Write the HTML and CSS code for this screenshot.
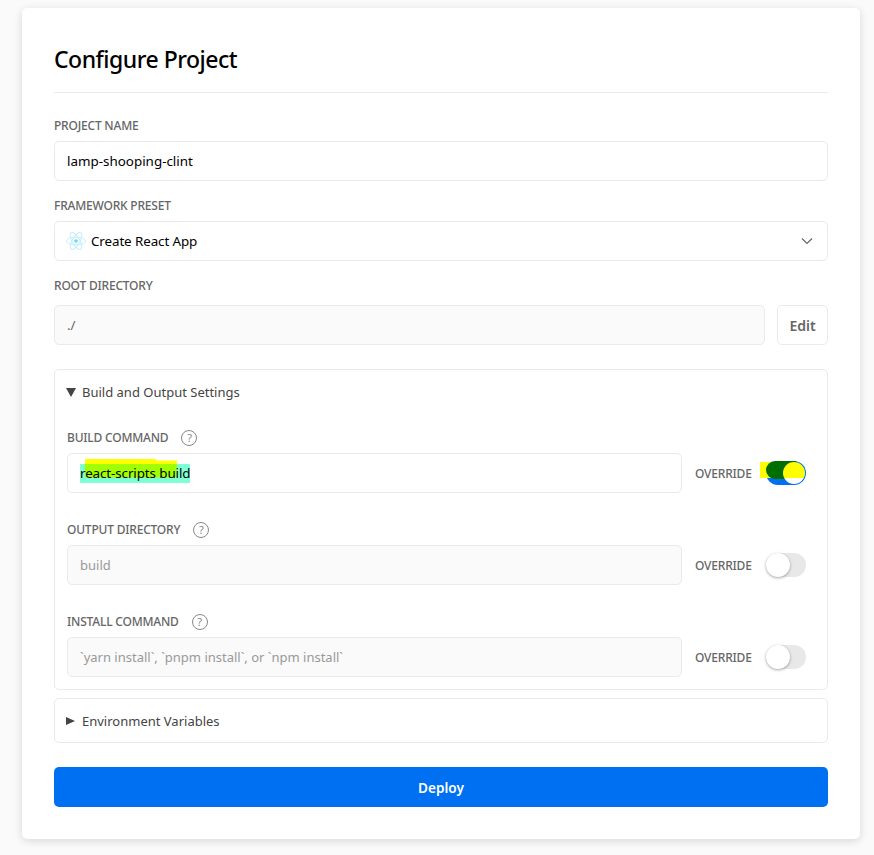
FILE: index.html
```html
<!DOCTYPE html>
<html lang="en">
<head>
    <meta charset="UTF-8">
    <title>Configure Project</title>
    <link rel="stylesheet" href="styles.css">
</head>
<body>
    <main class="card">
        <h1>Configure Project</h1>

        <div class="field">
            <label class="label">PROJECT NAME</label>
            <div class="input">lamp-shooping-clint</div>
        </div>

        <div class="field">
            <label class="label">FRAMEWORK PRESET</label>
            <div class="input select">
                <svg class="react" viewBox="-11 -11 22 22" width="20" height="20" fill="none" stroke="#bdeefc" stroke-width="1">
                    <ellipse rx="10.5" ry="4.2"/>
                    <ellipse rx="10.5" ry="4.2" transform="rotate(60)"/>
                    <ellipse rx="10.5" ry="4.2" transform="rotate(120)"/>
                    <circle r="2" fill="#61dafb" stroke="none"/>
                </svg>
                <span>Create React App</span>
                <svg class="chevron" viewBox="0 0 12 8" width="12" height="8" fill="none" stroke="#666" stroke-width="1.2">
                    <path d="M1 1.5 6 6.5 11 1.5"/>
                </svg>
            </div>
        </div>

        <div class="field">
            <label class="label root-label">ROOT DIRECTORY</label>
            <div class="row">
                <div class="input disabled grow">./</div>
                <button class="edit">Edit</button>
            </div>
        </div>

        <section class="panel">
            <div class="panel-head"><span class="arrow down"></span>Build and Output Settings</div>
            <div class="panel-body">
                <div class="setting">
                    <div class="label help-label">BUILD COMMAND <span class="help">?</span></div>
                    <div class="row">
                        <div class="input grow"><span class="marked">react-scripts build<span class="scribble"></span></span></div>
                        <span class="override">OVERRIDE</span>
                        <span class="toggle on"><span class="mark-bar"></span><span class="mark-dark"></span><span class="knob"></span></span>
                    </div>
                </div>
                <div class="setting">
                    <div class="label help-label">OUTPUT DIRECTORY <span class="help">?</span></div>
                    <div class="row">
                        <div class="input disabled grow placeholder">build</div>
                        <span class="override">OVERRIDE</span>
                        <span class="toggle"><span class="knob"></span></span>
                    </div>
                </div>
                <div class="setting">
                    <div class="label help-label">INSTALL COMMAND <span class="help">?</span></div>
                    <div class="row">
                        <div class="input disabled grow placeholder">`yarn install`, `pnpm install`, or `npm install`</div>
                        <span class="override">OVERRIDE</span>
                        <span class="toggle"><span class="knob"></span></span>
                    </div>
                </div>
            </div>
        </section>

        <section class="panel env">
            <div class="panel-head"><span class="arrow right"></span>Environment Variables</div>
        </section>

        <button class="deploy">Deploy</button>
    </main>
</body>
</html>
```

FILE: styles.css
```css
body {
    font-family: "Noto Sans", sans-serif;
    background-color: #fafafa;
    margin: 0;
    padding: 8px 14px 16px 22px;
    color: #000;
}

.card {
    background-color: #fff;
    border-radius: 5px;
    box-shadow: 0 2px 8px rgba(0, 0, 0, 0.14);
    padding: 32px;
    height: 767px;
}

h1 {
    margin: 0 0 24px;
    padding-bottom: 14px;
    border-bottom: 1px solid #eaeaea;
    font-size: 23px;
    line-height: 38px;
    font-weight: 500;
    letter-spacing: -0.5px;
}

.field {
    margin-bottom: 16px;
}

.label {
    display: block;
    font-size: 12px;
    line-height: 18px;
    font-weight: 500;
    letter-spacing: -0.2px;
    color: #666;
    margin-bottom: 6px;
}

.root-label {
    margin-bottom: 10px;
}

.input {
    display: flex;
    align-items: center;
    height: 38px;
    padding: 0 12px;
    border: 1px solid #eaeaea;
    border-radius: 5px;
    background-color: #fff;
    font-size: 13.4px;
    color: #000;
}

.select span {
    letter-spacing: -0.1px;
}

.select .react {
    margin-left: -1px;
    margin-right: 5px;
}

.select .chevron {
    margin-left: auto;
    margin-right: 2px;
}

.row {
    display: flex;
    align-items: center;
}

.grow {
    flex: 1;
    min-width: 0;
}

.disabled {
    background-color: #fafafa;
    color: #666;
}

.placeholder {
    font-size: 13px;
    color: #999;
}

.edit {
    margin-left: 12px;
    width: 51px;
    height: 40px;
    padding: 0;
    border: 1px solid #eaeaea;
    border-radius: 5px;
    background-color: #fff;
    font-family: inherit;
    font-size: 14px;
    font-weight: 600;
    color: #666;
}

.panel {
    border: 1px solid #eaeaea;
    border-radius: 5px;
    margin-top: 24px;
}

.panel-head {
    display: flex;
    align-items: center;
    height: 44px;
    padding: 0 11px;
    font-size: 13px;
    color: #444;
}

.arrow {
    width: 0;
    height: 0;
}

.arrow.down {
    border-left: 5px solid transparent;
    border-right: 5px solid transparent;
    border-top: 9px solid #444;
    margin-right: 6px;
}

.arrow.right {
    border-top: 4px solid transparent;
    border-bottom: 4px solid transparent;
    border-left: 9px solid #444;
    margin-right: 7px;
}

.panel-body {
    padding: 11px 12px 12px;
}

.setting {
    margin-bottom: 24px;
}

.setting:last-child {
    margin-bottom: 0;
}

.help-label {
    display: flex;
    align-items: center;
    box-sizing: border-box;
    height: 24px;
    padding-top: 1px;
    margin-bottom: 4px;
}

.help {
    display: inline-flex;
    align-items: center;
    justify-content: center;
    box-sizing: border-box;
    width: 16px;
    height: 16px;
    margin-left: 13px;
    border: 1px solid #888;
    border-radius: 50%;
    font-size: 11px;
    font-weight: 400;
    color: #888;
}

.override {
    flex: none;
    width: 56px;
    font-size: 12px;
    font-weight: 500;
    letter-spacing: -0.2px;
    color: #666;
    margin-left: 13px;
    margin-right: 15px;
}

.toggle {
    position: relative;
    display: block;
    flex: none;
    width: 40px;
    height: 24px;
    border-radius: 12px;
    background-color: #e8e8e8;
    margin-right: 9px;
}

.toggle.on {
    background-color: #0070f3;
}

.knob {
    position: absolute;
    left: 0;
    top: 0;
    width: 24px;
    height: 24px;
    border-radius: 50%;
    background-color: #fff;
    box-shadow: 0 1px 3px rgba(0, 0, 0, 0.35);
}

.toggle.on .knob {
    left: 17px;
    top: 1px;
    width: 22px;
    height: 22px;
    background: linear-gradient(#ff0 0, #ff0 73%, #fff 73%);
    box-shadow: none;
}

/* highlighter marks sitting on top of the text */
.marked {
    position: relative;
    z-index: 0;
    background-color: #7fffd4;
    line-height: 19px;
    letter-spacing: -0.1px;
    display: block;
}

.scribble {
    position: absolute;
    left: 5px;
    top: -5px;
    width: 92px;
    height: 19px;
    z-index: -1;
    background: linear-gradient(#ff0 5px, #a0ff00 5px);
    clip-path: polygon(0 0, 77% 0, 77% 10%, 100% 10%, 100% 100%, 0 100%);
}

.mark-bar {
    position: absolute;
    left: -6px;
    top: 1px;
    width: 24px;
    height: 16px;
    background-color: #ff0;
}

.mark-dark {
    position: absolute;
    left: 0;
    top: 0;
    width: 30px;
    height: 18px;
    border-radius: 9px 0 0 9px;
    background-color: #006f00;
}

.env {
    margin-top: 8px;
}

.env .panel-head {
    height: 43px;
}

.deploy {
    display: block;
    width: 100%;
    height: 40px;
    margin-top: 24px;
    border: 0;
    border-radius: 5px;
    background-color: #0070f3;
    color: #fff;
    font-family: inherit;
    font-size: 13.6px;
    font-weight: 600;
}
```
